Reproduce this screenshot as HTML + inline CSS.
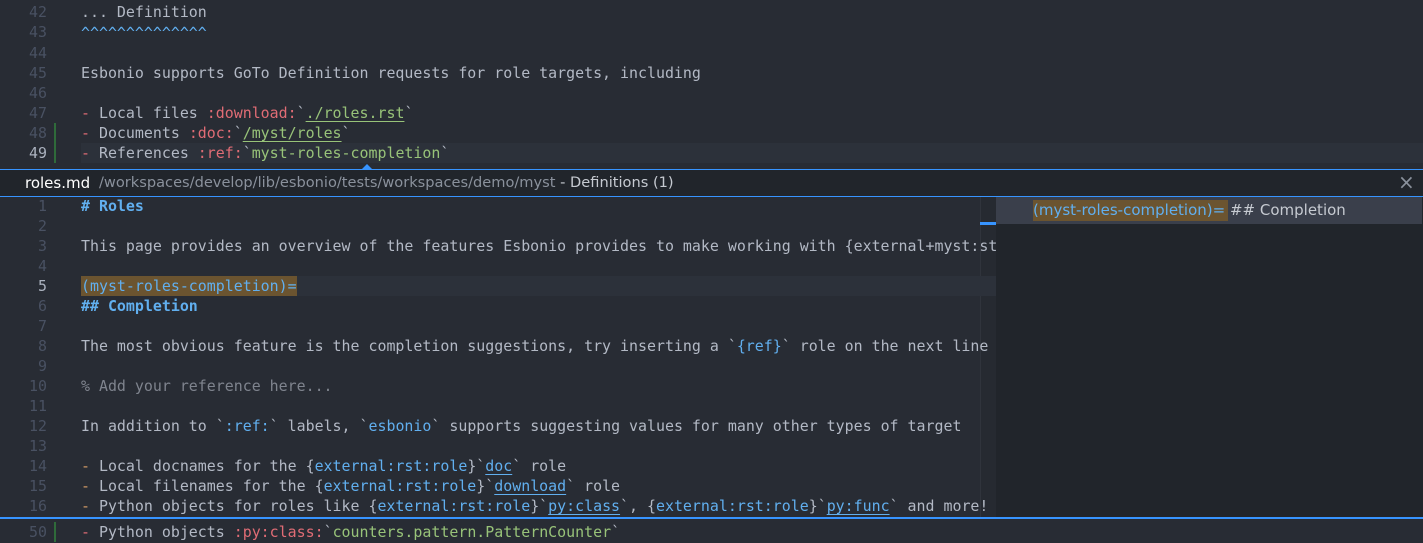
<!DOCTYPE html>
<html><head><meta charset="utf-8"><style>
*{margin:0;padding:0;box-sizing:border-box}
body{width:1423px;height:543px;overflow:hidden;background:#282c34;font-family:"DejaVu Sans Mono","Liberation Mono",monospace;font-size:14.93px;color:#b3b9c5;position:relative}
.ln{position:absolute;left:0;width:47px;text-align:right;color:#495162;height:20px;line-height:20px}
.tx{position:absolute;left:81px;height:20px;line-height:20px;white-space:pre}
.r{color:#e06c75}.g{color:#98c379}.b{color:#61afef}.o{color:#d19a66}.c{color:#7f848e}
.u{text-decoration:underline;text-underline-offset:3px}
.bar{position:absolute;left:54px;width:2px;height:20px;background:#2f6b3a}
.sans{font-family:"DejaVu Sans","Liberation Sans",sans-serif}
</style></head><body>
<div style="position:absolute;left:81px;top:143px;width:1342px;height:20px;background:#2c313a"></div>
<div class="ln" style="top:2px">42</div><div class="tx" style="top:2px">... Definition</div>
<div class="ln" style="top:22px">43</div><div class="tx b" style="top:23px">^^^^^^^^^^^^^^</div>
<div class="ln" style="top:43px">44</div>
<div class="ln" style="top:63px">45</div><div class="tx" style="top:63px">Esbonio supports GoTo Definition requests for role targets, including</div>
<div class="ln" style="top:83px">46</div>
<div class="ln" style="top:103px">47</div><div class="tx" style="top:103px"><span class="r">-</span> Local files <span class="r">:download:</span>`<span class="g u">./roles.rst</span>`</div>
<div class="ln" style="top:123px">48</div><div class="bar" style="top:123px"></div><div class="tx" style="top:123px"><span class="r">-</span> Documents <span class="r">:doc:</span>`<span class="g u">/myst/roles</span>`</div>
<div class="ln" style="top:143px;color:#abb2bf">49</div><div class="bar" style="top:143px"></div><div class="tx" style="top:143px"><span class="r">-</span> References <span class="r">:ref:</span>`<span class="g">myst-roles-completion</span>`</div>

<div style="position:absolute;left:361px;top:164px;width:0;height:0;border-left:6px solid transparent;border-right:6px solid transparent;border-bottom:6px solid #3794ff"></div>
<div class="sans" style="position:absolute;left:0;top:169px;width:1423px;height:28px;background:#21252b;border-top:1px solid #3794ff;border-bottom:1px solid #3794ff;font-size:15px;line-height:26px;white-space:pre"><span style="position:absolute;top:0;left:25px;color:#fff">roles.md</span><span style="position:absolute;top:0;left:99px;color:#8a919c;font-size:14.6px">/workspaces/develop/lib/esbonio/tests/workspaces/demo/myst <span style="color:#c6cad1">- Definitions (1)</span></span><span style="position:absolute;left:1398px;top:-1px;color:#8a919c;font-size:20px">×</span></div>

<div style="position:absolute;left:0;top:197px;width:996px;height:320px;background:#282c34"></div>
<div style="position:absolute;left:980px;top:197px;width:16px;height:320px;background:#262a31;border-left:1px solid #30343c"></div>
<div style="position:absolute;left:980px;top:222px;width:16px;height:3px;background:#3794ff"></div>
<div style="position:absolute;left:996px;top:197px;width:427px;height:320px;background:#21252b"></div>
<div style="position:absolute;left:996px;top:197px;width:426px;height:27px;background:#3a3f4b"></div>
<div style="position:absolute;left:1033px;top:200px;width:195px;height:21px;background:#6b5430"></div>
<div class="sans" style="position:absolute;left:1033px;top:200px;font-size:15px;line-height:21px;white-space:pre;color:#c6cad1"><span style="color:#61afef">(myst-roles-completion)=</span> ## Completion</div>
<div style="position:absolute;left:81px;top:276px;width:915px;height:20px;background:#2c313a"></div>
<div style="position:absolute;left:81px;top:276px;width:216px;height:20px;background:#6b5430"></div>

<div class="ln" style="top:196px">1</div><div class="tx b" style="top:196px;font-weight:bold"># Roles</div>
<div class="ln" style="top:216px">2</div>
<div class="ln" style="top:236px">3</div><div class="tx" style="top:236px;width:915px;overflow:hidden">This page provides an overview of the features Esbonio provides to make working with {external+myst:st</div>
<div class="ln" style="top:256px">4</div>
<div class="ln" style="top:276px;color:#abb2bf">5</div><div class="tx b" style="top:276px">(myst-roles-completion)=</div>
<div class="ln" style="top:296px">6</div><div class="tx b" style="top:296px;font-weight:bold">## Completion</div>
<div class="ln" style="top:316px">7</div>
<div class="ln" style="top:336px">8</div><div class="tx" style="top:336px">The most obvious feature is the completion suggestions, try inserting a `<span class="b">{ref}</span>` role on the next line</div>
<div class="ln" style="top:356px">9</div>
<div class="ln" style="top:376px">10</div><div class="tx c" style="top:376px">% Add your reference here...</div>
<div class="ln" style="top:396px">11</div>
<div class="ln" style="top:416px">12</div><div class="tx" style="top:416px">In addition to `<span class="b">:ref:</span>` labels, `<span class="b">esbonio</span>` supports suggesting values for many other types of target</div>
<div class="ln" style="top:436px">13</div>
<div class="ln" style="top:456px">14</div><div class="tx" style="top:456px"><span class="o">-</span> Local docnames for the {<span class="b">external:rst:role</span>}`<span class="b u">doc</span>` role</div>
<div class="ln" style="top:476px">15</div><div class="tx" style="top:476px"><span class="o">-</span> Local filenames for the {<span class="b">external:rst:role</span>}`<span class="b u">download</span>` role</div>
<div class="ln" style="top:496px">16</div><div class="tx" style="top:496px"><span class="o">-</span> Python objects for roles like {<span class="b">external:rst:role</span>}`<span class="b u">py:class</span>`, {<span class="b">external:rst:role</span>}`<span class="b u">py:func</span>` and more!</div>

<div style="position:absolute;left:0;top:517px;width:1423px;height:2px;background:#3794ff"></div>
<div class="ln" style="top:522px">50</div><div class="bar" style="top:522px"></div><div class="tx" style="top:522px"><span class="r">-</span> Python objects <span class="r">:py:class:</span>`<span class="g">counters.pattern.PatternCounter</span>`</div>
</body></html>
